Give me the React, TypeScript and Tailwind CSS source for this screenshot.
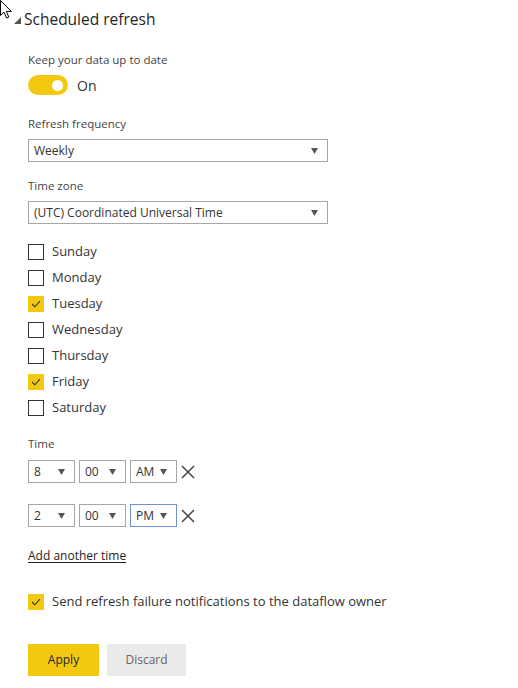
import React from 'react';

const font = { fontFamily: '"Open Sans", "Noto Sans", sans-serif' };

const Arrow = () => (
  <svg width="7" height="6" viewBox="0 0 7 6" className="shrink-0">
    <polygon points="0,0 7,0 3.5,6" fill="#555" />
  </svg>
);

const Check = () => (
  <svg width="10" height="8" viewBox="0 0 10 8">
    <polyline points="1,4 3.8,6.8 9,1.2" fill="none" stroke="#333" strokeWidth="1.1" />
  </svg>
);

const Box = ({ checked }: { checked?: boolean }) =>
  checked ? (
    <div className="w-[16px] h-[16px] bg-[#f2c811] flex items-center justify-center shrink-0">
      <Check />
    </div>
  ) : (
    <div className="w-[16px] h-[16px] border border-[#333] bg-white shrink-0" />
  );

const Select = ({ value, w, focus }: { value: string; w: string; focus?: boolean }) => (
  <div
    className={`${w} h-[23px] flex items-center justify-between pl-[5px] pr-[9px] border ${
      focus ? 'border-[#6d93d6]' : 'border-[#a6a6a6]'
    } bg-white text-[12px] text-[#333]`}
  >
    <span>{value}</span>
    <Arrow />
  </div>
);

const TimeRow = ({ h, m, ap, focus }: { h: string; m: string; ap: string; focus?: boolean }) => (
  <div className="flex items-center gap-[4px]">
    <Select value={h} w="w-[47px]" />
    <Select value={m} w="w-[47px]" />
    <Select value={ap} w="w-[47px]" focus={focus} />
    <svg width="14" height="14" viewBox="0 0 14 14">
      <path d="M1 1 L13 13 M13 1 L1 13" stroke="#444" strokeWidth="1.5" />
    </svg>
  </div>
);

const days: [string, boolean][] = [
  ['Sunday', false],
  ['Monday', false],
  ['Tuesday', true],
  ['Wednesday', false],
  ['Thursday', false],
  ['Friday', true],
  ['Saturday', false],
];

export default function App() {
  return (
    <div className="relative w-[518px] h-[688px] bg-white overflow-hidden text-[#333]" style={font}>
      <svg width="13" height="19" viewBox="0 0 13 19" className="absolute left-0 top-0">
        <path d="M0.5 0.5 L0.5 15.5 L4 12.2 L6.6 18 L8.8 17 L6.3 11.4 L11.3 11.4 Z" fill="#fff" stroke="#000" strokeWidth="1" />
      </svg>

      <div className="flex items-center h-[24px] mt-[7px] pl-[14px]">
        <svg width="7" height="7" viewBox="0 0 7 7" className="mr-[3px] mt-[2px]">
          <polygon points="7,0 7,7 0,7" fill="#555" />
        </svg>
        <span className="text-[15.5px] leading-[24px] text-[#252423]">Scheduled refresh</span>
      </div>

      <div className="pl-[28px]">
        <div className="mt-[21px] text-[11.5px] leading-[16px] text-[#444]">Keep your data up to date</div>
        <div className="mt-[7px] flex items-center h-[20px]">
          <div className="w-[40px] h-[20px] rounded-full bg-[#f2c811] flex items-center justify-end pr-[5px]">
            <div className="w-[11px] h-[11px] rounded-full bg-white" />
          </div>
          <span className="ml-[9px] text-[14px] text-[#333]">On</span>
        </div>

        <div className="mt-[21px] text-[11.5px] leading-[16px] text-[#444]">Refresh frequency</div>
        <div className="mt-[7px]">
          <Select value="Weekly" w="w-[300px]" />
        </div>

        <div className="mt-[16px] text-[11.5px] leading-[16px] text-[#444]">Time zone</div>
        <div className="mt-[7px]">
          <Select value="(UTC) Coordinated Universal Time" w="w-[300px]" />
        </div>

        <div className="mt-[15px] flex flex-col">
          {days.map(([d, c]) => (
            <div key={d} className="h-[26px] flex items-center gap-[8px]">
              <Box checked={c} />
              <span className="text-[13px] text-[#333]">{d}</span>
            </div>
          ))}
        </div>

        <div className="mt-[15px] text-[11.5px] leading-[16px] text-[#444]">Time</div>
        <div className="mt-[8px]">
          <TimeRow h="8" m="00" ap="AM" />
        </div>
        <div className="mt-[21px]">
          <TimeRow h="2" m="00" ap="PM" focus />
        </div>

        <div className="mt-[21px] text-[12px] leading-[16px] text-[#252423] underline underline-offset-2">
          Add another time
        </div>

        <div className="mt-[25px] h-[26px] flex items-center gap-[8px]">
          <Box checked />
          <span className="text-[13px] text-[#333]">Send refresh failure notifications to the dataflow owner</span>
        </div>

        <div className="mt-[29px] flex gap-[8px]">
          <button className="w-[71px] h-[32px] bg-[#f2c811] text-[12px] text-[#252423]">Apply</button>
          <button className="w-[79px] h-[32px] bg-[#eaeaea] text-[12px] text-[#666]">Discard</button>
        </div>
      </div>
    </div>
  );
}
